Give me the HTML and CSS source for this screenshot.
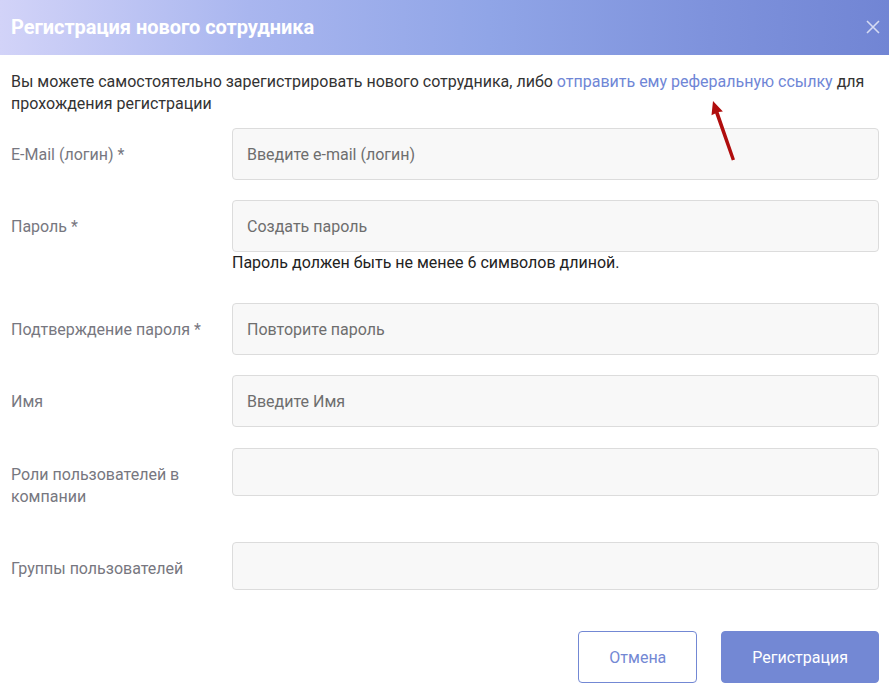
FILE: index.html
```html
<!DOCTYPE html>
<html lang="ru">
<head>
<meta charset="utf-8">
<title>Регистрация нового сотрудника</title>
<link rel="stylesheet" href="styles.css">
</head>
<body>
<div class="modal">
  <header class="modal-header">
    <h1 class="modal-title">Регистрация нового сотрудника</h1>
    <button class="close" type="button" aria-label="Закрыть">
      <svg width="14" height="14" viewBox="0 0 14 14"><path d="M1 1L13 13M13 1L1 13" stroke="currentColor" stroke-width="1.6" fill="none"/></svg>
    </button>
  </header>
  <div class="modal-body">
    <p class="intro">Вы можете самостоятельно зарегистрировать нового сотрудника, либо <a href="#" class="link">отправить ему реферальную ссылку</a> для прохождения регистрации</p>
    <form class="form">
      <div class="row">
        <label class="label">E-Mail (логин) *</label>
        <div class="field"><input class="input" type="text" placeholder="Введите e-mail (логин)"></div>
      </div>
      <div class="row row-help">
        <label class="label">Пароль *</label>
        <div class="field">
          <input class="input" type="password" placeholder="Создать пароль">
          <p class="help">Пароль должен быть не менее 6 символов длиной.</p>
        </div>
      </div>
      <div class="row">
        <label class="label">Подтверждение пароля *</label>
        <div class="field"><input class="input" type="password" placeholder="Повторите пароль"></div>
      </div>
      <div class="row row-wide">
        <label class="label">Имя</label>
        <div class="field"><input class="input" type="text" placeholder="Введите Имя"></div>
      </div>
      <div class="row">
        <label class="label">Роли пользователей в компании</label>
        <div class="field"><div class="select"></div></div>
      </div>
      <div class="row">
        <label class="label">Группы пользователей</label>
        <div class="field"><div class="select"></div></div>
      </div>
    </form>
  </div>
  <footer class="modal-footer">
    <button class="btn btn-outline" type="button">Отмена</button>
    <button class="btn btn-primary" type="button">Регистрация</button>
  </footer>
  <svg class="arrow" width="40" height="70" viewBox="700 95 40 70">
    <polygon points="713,101 722.9,111.5 718.6,112 735,159.5 731.8,160.6 715.2,113.6 711.5,115.3" fill="#b00d0d"/>
  </svg>
</div>
</body>
</html>
```
FILE: styles.css
```css
* { box-sizing: border-box; }
html, body { margin: 0; padding: 0; background: #fff; }
body {
  font-family: Roboto, "Noto Sans", "Liberation Sans", sans-serif;
  color: #333;
}
.modal {
  position: relative;
  width: 889px;
  height: 694px;
  background: #fff;
}
.modal-header {
  height: 55px;
  display: flex;
  align-items: center;
  justify-content: space-between;
  padding: 0 11px 2px;
  background: linear-gradient(90deg, #d2d3f8 0%, #a9b6ef 28%, #90a5e7 55%, #7e92dc 80%, #7185d4 100%);
}
.modal-title {
  margin: 0;
  font-size: 20px;
  font-weight: 700;
  color: #fff;
  letter-spacing: -0.05px;
}
.close {
  border: 0;
  background: none;
  padding: 0;
  margin-right: -2px;
  color: rgba(255,255,255,0.7);
  display: flex;
  cursor: pointer;
}
.modal-body {
  padding: 16px 10px 0 11px;
}
.intro {
  margin: 0 0 13px;
  font-size: 16px;
  line-height: 22px;
  color: #333;
}
.link {
  color: #6f86d6;
  text-decoration: none;
}
.form { display: block; }
.row {
  display: grid;
  grid-template-columns: 221px 1fr;
  margin-bottom: 20px;
}
.row-help { margin-bottom: 29px; }
.row-wide { margin-bottom: 21px; }
.label {
  padding: 16px 0 14px;
  font-size: 16px;
  line-height: 22px;
  color: #777780;
}
.field { min-width: 0; }
.input {
  display: block;
  width: 100%;
  height: 52px;
  margin: 0;
  padding: 0 14px;
  border: 1px solid #dcdcdc;
  border-radius: 4px;
  background: #f8f8f8;
  font-family: inherit;
  font-size: 16px;
  color: #333;
  outline: none;
}
.input::placeholder { color: #6e6e6e; opacity: 1; }
.select {
  height: 48px;
  border: 1px solid #dcdcdc;
  border-radius: 4px;
  background: #f8f8f8;
}
.help {
  margin: 0;
  font-size: 16px;
  line-height: 22px;
  color: #222;
}
.modal-footer {
  display: flex;
  justify-content: flex-end;
  gap: 24px;
  padding: 17px 10px 0 11px;
}
.btn {
  height: 52px;
  padding: 0 30px;
  border-radius: 4px;
  font-family: inherit;
  font-size: 16px;
  cursor: pointer;
}
.btn-outline {
  background: #fff;
  border: 1px solid #7388d4;
  color: #7388d4;
}
.btn-primary {
  background: #7388d4;
  border: 1px solid #7388d4;
  color: #fff;
}
.arrow {
  position: absolute;
  left: 700px;
  top: 95px;
}
```
